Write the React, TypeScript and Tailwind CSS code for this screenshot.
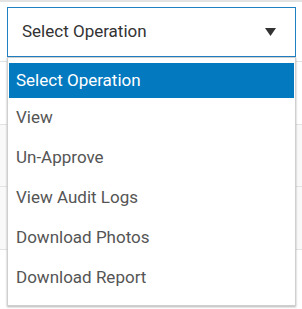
import { useState } from 'react';

const OPTIONS = ['Select Operation', 'View', 'Un-Approve', 'View Audit Logs', 'Download Photos', 'Download Report'];

export default function App() {
  const [selected, setSelected] = useState(0);

  return (
    <div className="relative w-[302px] h-[309px] overflow-hidden bg-white font-['Roboto',sans-serif]">
      {/* table rows behind the select */}
      <div className="flex flex-col">
        <div className="h-[62px] border-t-2 border-b border-[#e3e3e3] px-[7px] pt-[5px]">
          <button className="w-[289px] h-[50px] flex items-center justify-between border border-[#1f80c2] bg-white pl-[14px] pr-[19px] text-[17px] text-[#333]">
            <span>Select Operation</span>
            <svg width="11" height="8" viewBox="0 0 11 8">
              <polygon points="0,0 11,0 5.5,8" fill="#333" />
            </svg>
          </button>
        </div>
        <div className="h-[63px] border-b border-[#e3e3e3]" />
        <div className="h-[62px] border-b border-[#e3e3e3] bg-[#f9f9f9]" />
        <div className="h-[63px] border-b border-[#e3e3e3] bg-[#f9f9f9]" />
        <div className="flex-1 bg-[#f9f9f9]" />
      </div>

      {/* open listbox */}
      <ul className="absolute left-[7px] top-[57px] w-[289px] h-[249px] border border-[#cfcfcf] bg-white px-px pt-[5px] shadow-[0_1px_2px_rgba(0,0,0,0.3)]">
        {OPTIONS.map((opt, i) => (
          <li
            key={opt}
            onClick={() => setSelected(i)}
            className={
              i === 0
                ? 'h-[35px] flex items-center pl-[7px] text-[17px] ' +
                  (selected === i ? 'bg-[#0379bf] text-white' : 'text-[#555]')
                : 'h-[40px] flex items-center pl-[7px] text-[17px] ' +
                  (selected === i ? 'bg-[#0379bf] text-white' : 'text-[#555]')
            }
          >
            {opt}
          </li>
        ))}
      </ul>
    </div>
  );
}
